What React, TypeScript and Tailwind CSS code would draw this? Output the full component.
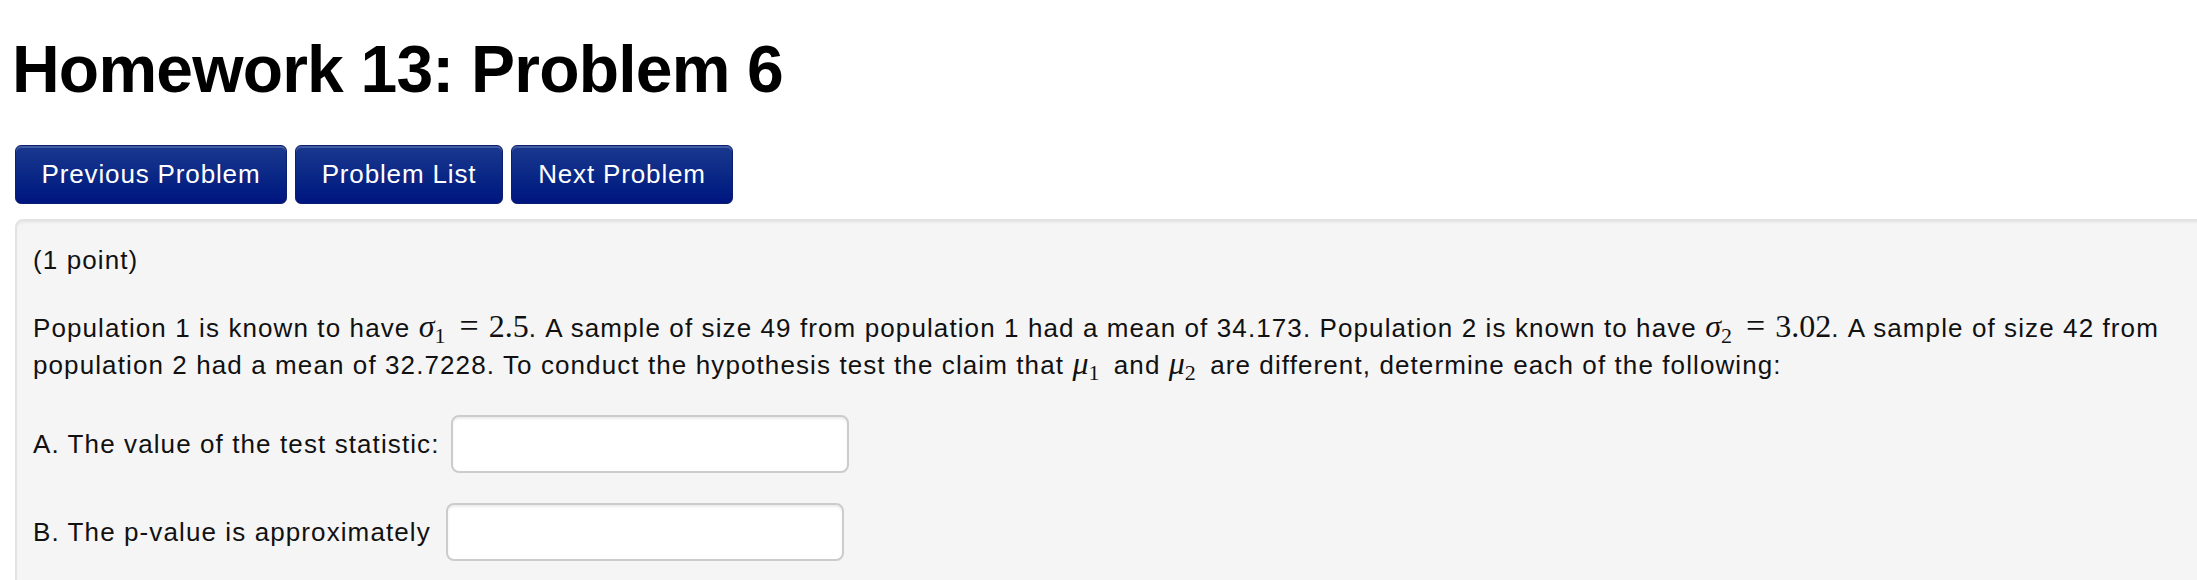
import React from "react";

const Sub = ({ children }: { children: React.ReactNode }) => (
  <span className="text-[22px] leading-none align-[-6px]">{children}</span>
);

const MathEq = ({ sym, sub, value }: { sym: string; sub: string; value?: string }) => (
  <span className="font-['Liberation_Serif','Times_New_Roman',serif] text-[32px] leading-none tracking-normal">
    <i>{sym}</i>
    <Sub>{sub}</Sub>
    {value !== undefined ? (
      <>
        <span className="ml-[14px] mr-[10px] text-[34px] leading-none">=</span>
        <span>{value}</span>
      </>
    ) : (
      <span className="mr-[6px]" />
    )}
  </span>
);

const NavButton = ({ label, width }: { label: string; width: string }) => (
  <button
    type="button"
    className={`${width} flex h-[59px] items-center justify-center rounded-[6px] border border-[#0b1f70] bg-linear-to-b from-[#1b388e] to-[#00147f] text-[26px] tracking-[0.85px] text-white shadow-[inset_0_2px_0_rgba(255,255,255,0.18)]`}
  >
    {label}
  </button>
);

export default function App() {
  return (
    <div className="h-[580px] w-[2197px] overflow-hidden bg-white font-['Liberation_Sans',Arial,sans-serif] text-[#111]">
      <h1 className="pl-[12px] pt-[32px] text-[66px] font-bold leading-[74px] tracking-[-0.8px] text-black">
        Homework 13: Problem 6
      </h1>

      <div className="ml-[15px] mt-[39px] flex gap-2">
        <NavButton label="Previous Problem" width="w-[272px]" />
        <NavButton label="Problem List" width="w-[208px]" />
        <NavButton label="Next Problem" width="w-[222px]" />
      </div>

      <div className="ml-[15px] mt-[15px] h-[420px] w-[2250px] rounded-tl-[8px] border-2 border-[#e3e3e3] bg-[#f5f5f5] pl-[16px] pt-[21px] text-[26px] leading-[37px] tracking-[1.1px] shadow-[inset_0_2px_2px_rgba(0,0,0,0.05)]">
        <p>(1 point)</p>

        <p className="mt-[30px] whitespace-nowrap">
          Population 1 is known to have <MathEq sym="σ" sub="1" value="2.5" />. A sample of size 49 from
          population 1 had a mean of 34.173. Population 2 is known to have{" "}
          <MathEq sym="σ" sub="2" value="3.02" />. A sample of size 42 from
          <br />
          population 2 had a mean of 32.7228. To conduct the hypothesis test the claim that{" "}
          <MathEq sym="μ" sub="1" /> and <MathEq sym="μ" sub="2" /> are different, determine each of the
          following:
        </p>

        <div className="mt-[31px] flex items-center gap-[11px]">
          <span>A. The value of the test statistic:</span>
          <input
            type="text"
            className="h-[58px] w-[398px] rounded-[8px] border-2 border-[#cccccc] bg-white shadow-[inset_0_2px_2px_rgba(0,0,0,0.075)] outline-none"
          />
        </div>

        <div className="mt-[30px] flex items-center gap-[15px]">
          <span>B. The p-value is approximately</span>
          <input
            type="text"
            className="h-[58px] w-[398px] rounded-[8px] border-2 border-[#cccccc] bg-white shadow-[inset_0_2px_2px_rgba(0,0,0,0.075)] outline-none"
          />
        </div>
      </div>
    </div>
  );
}
